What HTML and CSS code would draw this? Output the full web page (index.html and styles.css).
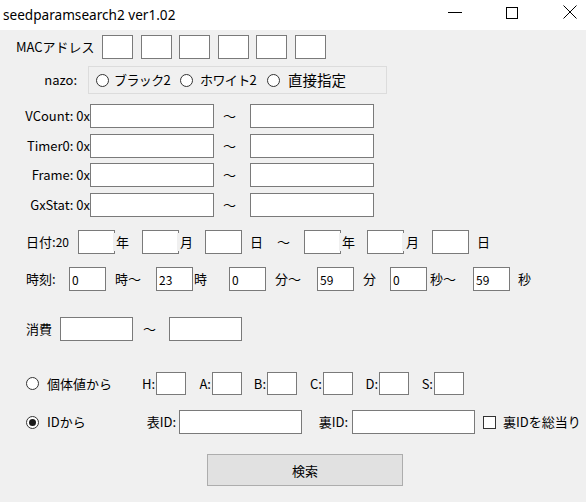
FILE: index.html
```html
<!DOCTYPE html>
<html lang="ja">
<head>
<meta charset="utf-8">
<title>seedparamsearch2 ver1.02</title>
<link rel="stylesheet" href="styles.css">
</head>
<body>
<div class="window">
  <div class="titlebar">
    <span class="title">seedparamsearch2 ver1.02</span>
    <svg class="controls" width="160" height="30" viewBox="0 0 160 30">
      <line x1="22" y1="12.5" x2="36" y2="12.5" stroke="#000" stroke-width="1"/>
      <rect x="80.5" y="7.5" width="11" height="11" fill="none" stroke="#000" stroke-width="1"/>
      <line x1="137.5" y1="5.5" x2="150.5" y2="18.5" stroke="#000" stroke-width="1"/>
      <line x1="150.5" y1="5.5" x2="137.5" y2="18.5" stroke="#000" stroke-width="1"/>
    </svg>
  </div>
  <div class="client">
    <div class="row mac">
      <span class="cell mac-lbl">MACアドレス</span>
      <div class="mac-boxes">
        <input class="tb mac-tb" type="text">
        <input class="tb mac-tb" type="text">
        <input class="tb mac-tb" type="text">
        <input class="tb mac-tb" type="text">
        <input class="tb mac-tb" type="text">
        <input class="tb mac-tb" type="text">
      </div>
    </div>

    <div class="row nazo">
      <span class="cell nazo-lbl">nazo:</span>
      <div class="group">
        <span class="opt opt1"><span class="radio"></span><span class="cell narrow">ブラック2</span></span>
        <span class="opt opt2"><span class="radio"></span><span class="cell narrow">ホワイト2</span></span>
        <span class="opt opt3"><span class="radio"></span><span class="cell big">直接指定</span></span>
      </div>
    </div>

    <div class="row hex r-v">
      <span class="cell hex-lbl">VCount: 0x</span>
      <input class="tb hex-tb" type="text">
      <span class="cell tilde-c">～</span>
      <input class="tb hex-tb" type="text">
    </div>
    <div class="row hex r-t">
      <span class="cell hex-lbl">Timer0: 0x</span>
      <input class="tb hex-tb" type="text">
      <span class="cell tilde-c">～</span>
      <input class="tb hex-tb" type="text">
    </div>
    <div class="row hex r-f">
      <span class="cell hex-lbl">Frame: 0x</span>
      <input class="tb hex-tb" type="text">
      <span class="cell tilde-c">～</span>
      <input class="tb hex-tb" type="text">
    </div>
    <div class="row hex r-g">
      <span class="cell hex-lbl">GxStat: 0x</span>
      <input class="tb hex-tb" type="text">
      <span class="cell tilde-c">～</span>
      <input class="tb hex-tb" type="text">
    </div>

    <div class="row date">
      <span class="cell d-lbl">日付:<span class="small">20</span></span>
      <input class="tb d-tb" type="text">
      <span class="cell cover w-y1">年</span>
      <input class="tb d-tb" type="text">
      <span class="cell cover w-m1">月</span>
      <input class="tb d-tb" type="text">
      <span class="cell w-d1">日</span>
      <span class="cell w-til">～</span>
      <input class="tb d-tb" type="text">
      <span class="cell cover w-y2">年</span>
      <input class="tb d-tb" type="text">
      <span class="cell cover w-m2">月</span>
      <input class="tb d-tb" type="text">
      <span class="cell w-d2">日</span>
    </div>

    <div class="row time">
      <span class="cell t-lbl">時刻:</span>
      <input class="tb d-tb" type="text" value="0">
      <span class="cell t-c1">時～</span>
      <input class="tb d-tb" type="text" value="23">
      <span class="cell t-c2">時</span>
      <input class="tb d-tb" type="text" value="0">
      <span class="cell t-c3">分～</span>
      <input class="tb d-tb" type="text" value="59">
      <span class="cell t-c4">分</span>
      <input class="tb d-tb" type="text" value="0">
      <span class="cell t-c5">秒～</span>
      <input class="tb d-tb" type="text" value="59">
      <span class="cell t-c6">秒</span>
    </div>

    <div class="row shohi">
      <span class="cell s-lbl">消費</span>
      <input class="tb s-tb" type="text">
      <span class="cell s-til">～</span>
      <input class="tb s-tb" type="text">
    </div>

    <div class="row indiv">
      <span class="opt mode"><span class="radio"></span><span class="cell">個体値から</span></span>
      <span class="cell iv-lbl w26">H:</span>
      <input class="tb iv-tb" type="text">
      <span class="cell iv-lbl w26">A:</span>
      <input class="tb iv-tb" type="text">
      <span class="cell iv-lbl w25">B:</span>
      <input class="tb iv-tb" type="text">
      <span class="cell iv-lbl w26">C:</span>
      <input class="tb iv-tb" type="text">
      <span class="cell iv-lbl w26">D:</span>
      <input class="tb iv-tb" type="text">
      <span class="cell iv-lbl w25">S:</span>
      <input class="tb iv-tb" type="text">
    </div>

    <div class="row idrow">
      <span class="opt mode"><span class="radio checked"></span><span class="cell">IDから</span></span>
      <span class="cell id-lbl1">表ID:</span>
      <input class="tb id-tb" type="text">
      <span class="cell id-lbl2">裏ID:</span>
      <input class="tb id-tb" type="text">
      <span class="chk"><span class="box"></span><span class="cell">裏IDを総当り</span></span>
    </div>

    <div class="btnrow">
      <button class="btn" type="button">検索</button>
    </div>
  </div>
</div>
</body>
</html>
```

FILE: styles.css
```css
* { box-sizing: border-box; }
html, body { margin: 0; padding: 0; }
body {
  width: 586px;
  height: 502px;
  overflow: hidden;
  background: #f0f0f0;
  color: #000;
  font-family: "Noto Sans CJK JP", "Noto Sans", sans-serif;
  font-size: 13px;
}
.window { width: 586px; height: 502px; }
.titlebar {
  height: 30px;
  background: #fff;
  display: flex;
  align-items: center;
  overflow: hidden;
}
.title {
  font-family: "Noto Sans", "Segoe UI", sans-serif;
  font-size: 13.6px;
  padding-left: 3px;
  line-height: 18px;
  margin-top: -1px;
}
.controls { margin-left: auto; flex: none; display: block; }

.client { height: 472px; background: #f0f0f0; }

.row { display: flex; align-items: center; height: 24px; }
.cell { flex: none; white-space: nowrap; line-height: 18px; }

.tb {
  flex: none;
  display: block;
  height: 24px;
  margin: 0;
  padding: 0 2px;
  border: 1px solid #7a7a7a;
  background: #fff;
  border-radius: 0;
  font-family: "Noto Sans CJK JP", sans-serif;
  font-size: 12px;
  color: #000;
  outline: none;
}

/* MAC */
.mac { margin-top: 5px; padding-left: 16px; }
.mac-lbl { width: 86px; }
.mac-boxes { display: flex; gap: 7.6px; }
.mac-tb { width: 31px; }

/* nazo */
.nazo { margin-top: 7px; height: 28px; }
.nazo-lbl { width: 88px; text-align: right; padding-right: 11px; }
.group {
  width: 299px;
  height: 28px;
  border: 1px solid #dcdcdc;
  display: flex;
  align-items: center;
  padding-left: 7px;
}
.opt { display: flex; align-items: center; flex: none; }
.opt1 { width: 84px; gap: 5px; }
.opt2 { width: 87px; gap: 7px; }
.opt3 { gap: 8px; }
.narrow { letter-spacing: -0.6px; }
.big { font-size: 14.5px; }
.radio {
  flex: none;
  width: 13px;
  height: 13px;
  border: 1px solid #333;
  border-radius: 50%;
  background: #fff;
  display: flex;
  align-items: center;
  justify-content: center;
}
.radio.checked::after {
  content: "";
  width: 7px;
  height: 7px;
  border-radius: 50%;
  background: #1a1a1a;
}

/* hex rows */
.r-v { margin-top: 10px; }
.r-t { margin-top: 6px; }
.r-f { margin-top: 5px; }
.r-g { margin-top: 6px; }
.hex-lbl { width: 90px; text-align: right; }
.hex-tb { width: 124px; }
.tilde-c { width: 36px; padding-left: 9px; }

/* date */
.date { margin-top: 13px; padding-left: 26px; }
.d-lbl { width: 52px; }
.small { font-size: 12px; }
.d-tb { width: 37px; }
.cover { background: #f0f0f0; margin-left: -2px; padding-left: 3px; height: 18px; }
.w-y1 { width: 29px; }
.w-m1 { width: 28px; }
.w-d1 { width: 28px; padding-left: 8px; }
.w-til { width: 34px; padding-left: 7px; }
.w-y2 { width: 28px; }
.w-m2 { width: 30px; padding-left: 4px; }
.w-d2 { padding-left: 8px; }

/* time */
.time { margin-top: 13px; padding-left: 26px; }
.t-lbl { width: 43px; }
.t-c1 { width: 50px; padding-left: 9px; }
.t-c2 { width: 36px; padding-left: 1px; }
.t-c3 { width: 51px; padding-left: 9px; }
.t-c4 { width: 36px; padding-left: 9px; }
.t-c5 { width: 46px; padding-left: 3px; }
.t-c6 { padding-left: 8px; }

/* shohi */
.shohi { margin-top: 26px; padding-left: 26px; }
.s-lbl { width: 34px; }
.s-tb { width: 73px; }
.s-til { width: 36px; padding-left: 10px; }

/* individual values */
.indiv { margin-top: 31px; height: 23px; padding-left: 26px; }
.mode { width: 104px; gap: 8px; }
.iv-lbl { text-align: right; padding-right: 1px; }
.w26 { width: 26px; }
.w25 { width: 25px; }
.iv-tb { width: 30px; height: 23px; }

/* ID */
.idrow { margin-top: 15px; padding-left: 26px; }
.id-lbl1 { width: 49px; text-align: right; padding-right: 3px; }
.id-lbl2 { width: 50px; text-align: right; padding-right: 4px; }
.id-tb { width: 123px; }
.chk { display: flex; align-items: center; gap: 7px; margin-left: 8px; flex: none; }
.chk .box {
  width: 13px;
  height: 13px;
  border: 1px solid #333;
  background: #fff;
  flex: none;
}

/* button */
.btnrow { margin-top: 20px; padding-left: 207px; }
.btn {
  display: block;
  width: 196px;
  height: 32px;
  margin: 0;
  padding: 0;
  background: #e1e1e1;
  border: 1px solid #adadad;
  border-radius: 0;
  font-family: "Noto Sans CJK JP", sans-serif;
  font-size: 13px;
  color: #000;
}
```
